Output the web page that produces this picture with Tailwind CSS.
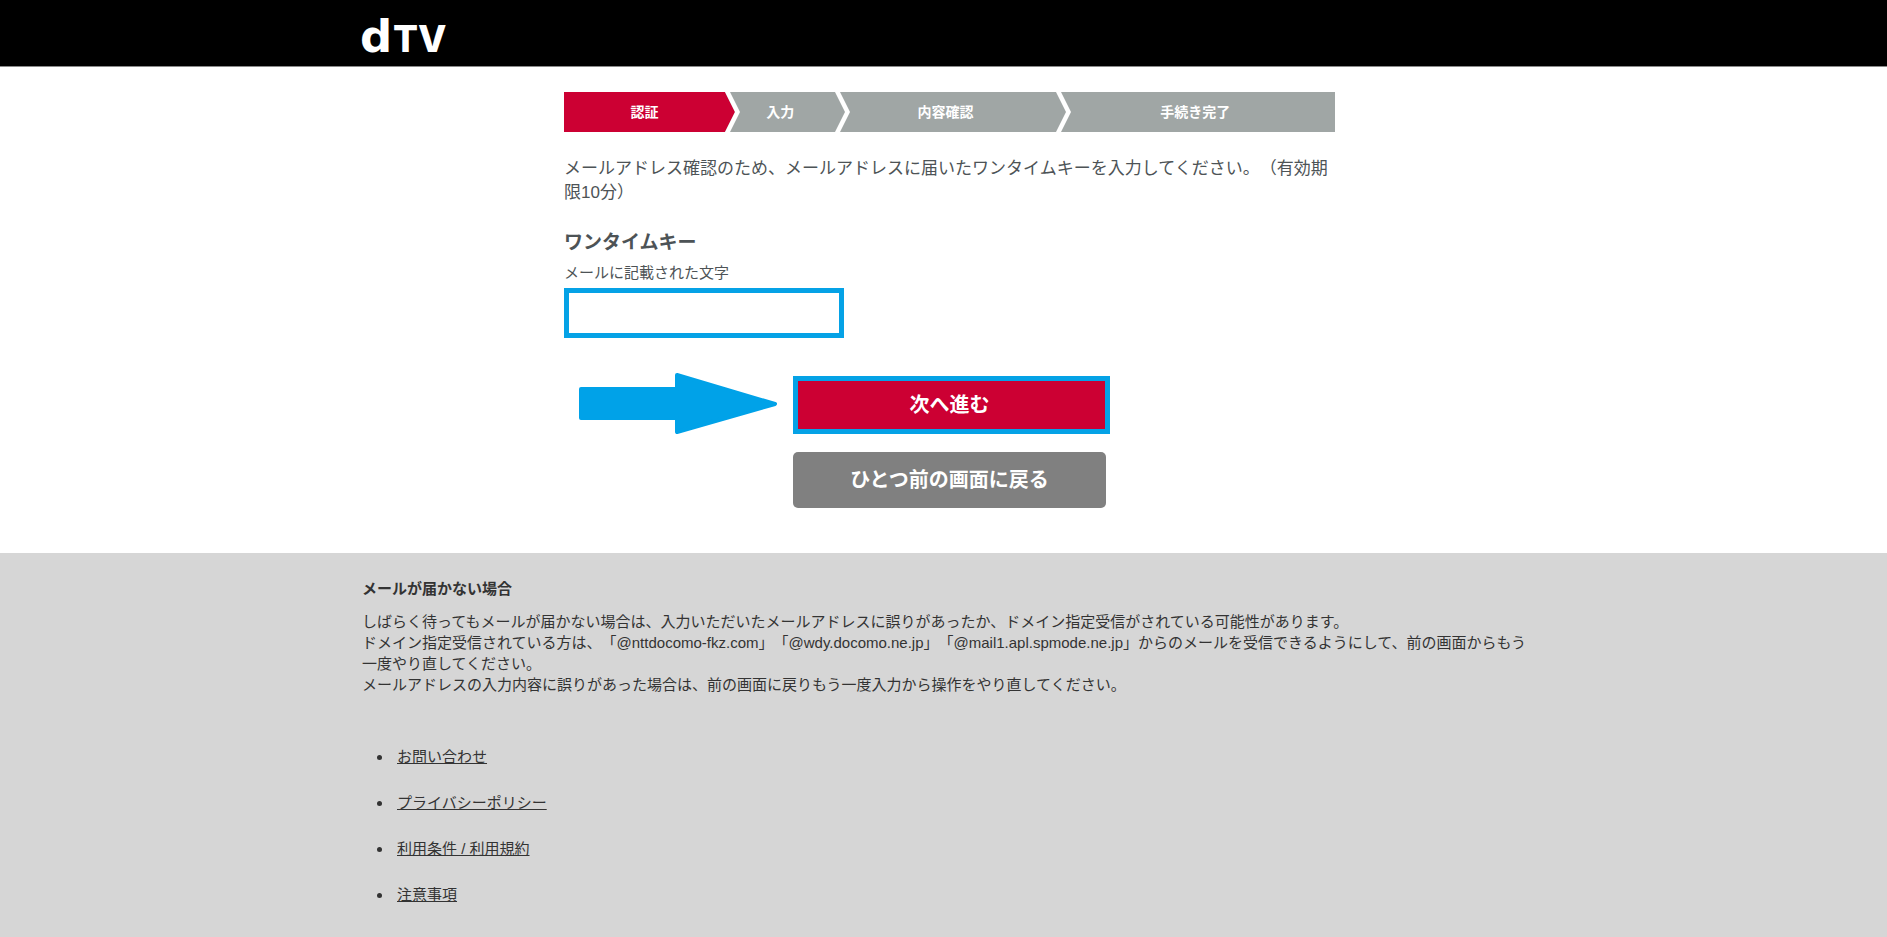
<!DOCTYPE html>
<html lang="ja">
  <head>
    <meta charset="UTF-8" />
    <meta name="viewport" content="width=device-width, initial-scale=1.0" />
    <title>dTV</title>
    <script src="https://cdn.jsdelivr.net/npm/@tailwindcss/browser@4"></script>
  </head>
  <body
    class="min-h-screen flex flex-col bg-white text-[#4d5356] font-['Liberation_Sans','Noto_Sans_CJK_JP',sans-serif] [text-spacing-trim:space-all]"
  >
    <!-- Header -->
    <header class="bg-black border-b border-[#8a8a8a]">
      <div class="w-full max-w-[1187px] mx-auto pl-2">
        <a href="#" class="block w-[96px]" aria-label="dTV">
          <svg class="block w-[96px] h-[66px]" viewBox="0 0 96 66" fill="#fff">
            <text x="2" y="52" font-family="DejaVu Sans" font-weight="700" font-size="45">d</text>
            <text x="35" y="52" font-family="Inter" font-weight="800" font-size="37">TV</text>
          </svg>
        </a>
      </div>
    </header>

    <main class="w-full max-w-[1187px] mx-auto pl-3">
      <div class="w-full max-w-[771px] mx-auto pt-[25px] pb-[45px]">
        <!-- Steps -->
        <ol class="flex h-10 text-sm font-bold text-white bg-[#a0a6a5]">
          <li class="flex-[161] flex items-center justify-center bg-[#cc0033]">認証</li>
          <li class="flex-[110] relative flex items-center justify-center">
            <svg class="absolute left-0 top-0 w-[15px] h-10" viewBox="0 0 15 40">
              <path d="M0 0L10 20L0 40Z" fill="#cc0033" />
              <path d="M0 0H5L15 20L5 40H0L10 20Z" fill="#fff" />
            </svg>
            入力
          </li>
          <li class="flex-[220] relative flex items-center justify-center">
            <svg class="absolute left-0 top-0 w-[15px] h-10" viewBox="0 0 15 40">
              <path d="M0 0H5L15 20L5 40H0L10 20Z" fill="#fff" />
            </svg>
            内容確認
          </li>
          <li class="flex-[279] relative flex items-center justify-center">
            <svg class="absolute left-0 top-0 w-[15px] h-10" viewBox="0 0 15 40">
              <path d="M0 0H5L15 20L5 40H0L10 20Z" fill="#fff" />
            </svg>
            手続き完了
          </li>
        </ol>

        <p class="mt-[25px] text-[17px] leading-6">
          メールアドレス確認のため、メールアドレスに届いたワンタイムキーを入力してください。（有効期限10分）
        </p>

        <form>
          <h2 class="mt-6 text-[19px] leading-7 font-bold">ワンタイムキー</h2>
          <label for="onetimekey" class="block mt-1 text-[15px] leading-6">メールに記載された文字</label>
          <input
            type="text"
            id="onetimekey"
            name="onetimekey"
            class="block mt-[3px] w-[280px] h-[50px] px-2 bg-white border-5 border-[#05a2e6] outline-none"
          />

          <div class="mt-[38px] flex flex-col items-center gap-[18px]">
            <div class="relative w-[313px]">
              <svg
                class="absolute right-full top-0 mr-4 -mt-1 w-[198px] h-[62px]"
                viewBox="0 0 198 62"
                fill="#00a2e8"
                stroke="#00a2e8"
                stroke-width="4"
                stroke-linejoin="round"
              >
                <path d="M2 17H98V3L196 32L98 60V46H2Z" />
              </svg>
              <button
                type="submit"
                class="block w-[317px] h-[58px] pr-1 bg-[#cc0033] border-5 border-[#05a2e6] text-xl font-bold text-white cursor-pointer"
              >
                次へ進む
              </button>
            </div>
            <button
              type="button"
              class="block w-[313px] h-14 bg-[#808080] rounded-[5px] text-xl font-bold text-white cursor-pointer"
            >
              ひとつ前の画面に戻る
            </button>
          </div>
        </form>
      </div>
    </main>

    <!-- Footer -->
    <footer class="grow bg-[#d6d6d6] text-[#333] text-[15px]">
      <div class="w-full max-w-[1187px] mx-auto pl-3 pt-[25px] pb-4">
        <h3 class="leading-[21px] font-bold">メールが届かない場合</h3>
        <p class="mt-3 leading-[21px]">
          しばらく待ってもメールが届かない場合は、入力いただいたメールアドレスに誤りがあったか、ドメイン指定受信がされている可能性があります。<br />
          ドメイン指定受信されている方は、「@nttdocomo-fkz.com」「@wdy.docomo.ne.jp」「@mail1.apl.spmode.ne.jp」からのメールを受信できるようにして、前の画面からもう一度やり直してください。<br />
          メールアドレスの入力内容に誤りがあった場合は、前の画面に戻りもう一度入力から操作をやり直してください。
        </p>
        <ul class="mt-[51px] pl-[31px] list-disc space-y-6 leading-[22px]">
          <li class="pl-1"><a href="#" class="underline">お問い合わせ</a></li>
          <li class="pl-1"><a href="#" class="underline">プライバシーポリシー</a></li>
          <li class="pl-1"><a href="#" class="underline">利用条件 / 利用規約</a></li>
          <li class="pl-1"><a href="#" class="underline">注意事項</a></li>
        </ul>
      </div>
    </footer>
  </body>
</html>
